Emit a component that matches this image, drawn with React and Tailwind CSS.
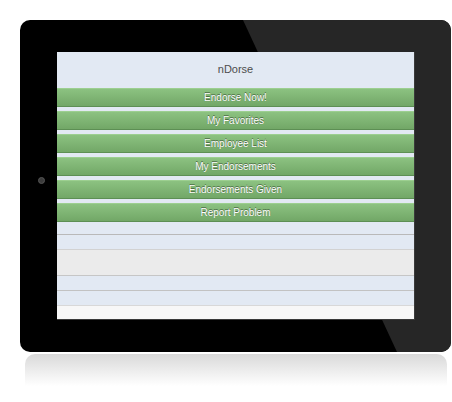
import React from 'react'

// ── Menu items ────────────────────────────────────────────────────────────────
const MENU = [
  'Endorse Now!',
  'My Favorites',
  'Employee List',
  'My Endorsements',
  'Endorsements Given',
  'Report Problem',
]

function MenuButton({ label }) {
  return (
    <div
      className="h-[19px] flex items-center justify-center bg-gradient-to-b from-[#8cc281] to-[#72a767] border-t border-t-[#9ccf90] border-b border-b-[#5d8f54] text-white text-[10px] leading-none"
      style={{ textShadow: '0 -1px 0 rgba(0,0,0,0.4), 0 0 1px rgba(0,0,0,0.25)' }}
    >
      {label}
    </div>
  )
}

// ── Tablet screen ─────────────────────────────────────────────────────────────
function Screen() {
  return (
    <div className="relative w-[358px] h-[268px] bg-[#f7f7f7] flex flex-col border-r border-b border-[#3a3a3a]">
      {/* Header */}
      <div className="h-[36px] bg-[#e2e9f3] flex items-center justify-center text-[11px] text-[#4d4d4d] pb-[1px]">
        nDorse
      </div>

      {/* Buttons */}
      <div className="flex flex-col gap-[4px] bg-[#e2e9f3]">
        {MENU.map(label => <MenuButton key={label} label={label} />)}
      </div>

      {/* Empty table rows */}
      <div className="h-[13px] bg-[#e2e9f3] border-b border-[#b9b9b9]" />
      <div className="h-[15px] bg-[#e2e9f3] border-b border-[#d2d2d2]" />
      <div className="h-[26px] bg-[#ebebeb] border-b border-[#c6c6c6]" />
      <div className="h-[15px] bg-[#e2e9f3] border-b border-[#c2c2c2]" />
      <div className="h-[15px] bg-[#e2e9f3] border-b border-[#d8d8d8]" />
      <div className="flex-1 bg-[#f7f7f7]" />
    </div>
  )
}

export default function App() {
  return (
    <div className="w-[452px] h-[402px] bg-white pt-[20px] pl-[20px]" style={{ fontFamily: '"Liberation Sans", Arial, sans-serif' }}>
      {/* Bezel */}
      <div className="relative w-[431px] h-[332px] rounded-[10px] bg-black overflow-hidden pt-[32px] pl-[37px]">
        {/* glare diagonal */}
        <svg className="absolute inset-0" width="431" height="332" viewBox="0 0 431 332">
          <polygon points="223,0 431,0 431,332 377,332" fill="#262626" />
        </svg>
        {/* camera */}
        <div className="absolute left-[18px] top-[157px] w-[7px] h-[7px] rounded-full bg-[#3c3c3c] border border-[#555]" />
        <Screen />
      </div>

      {/* Reflection */}
      <div className="ml-[5px] mt-[2px] w-[422px] h-[32px] rounded-t-[10px] bg-gradient-to-b from-[#d9d9d9] to-white" />
    </div>
  )
}
